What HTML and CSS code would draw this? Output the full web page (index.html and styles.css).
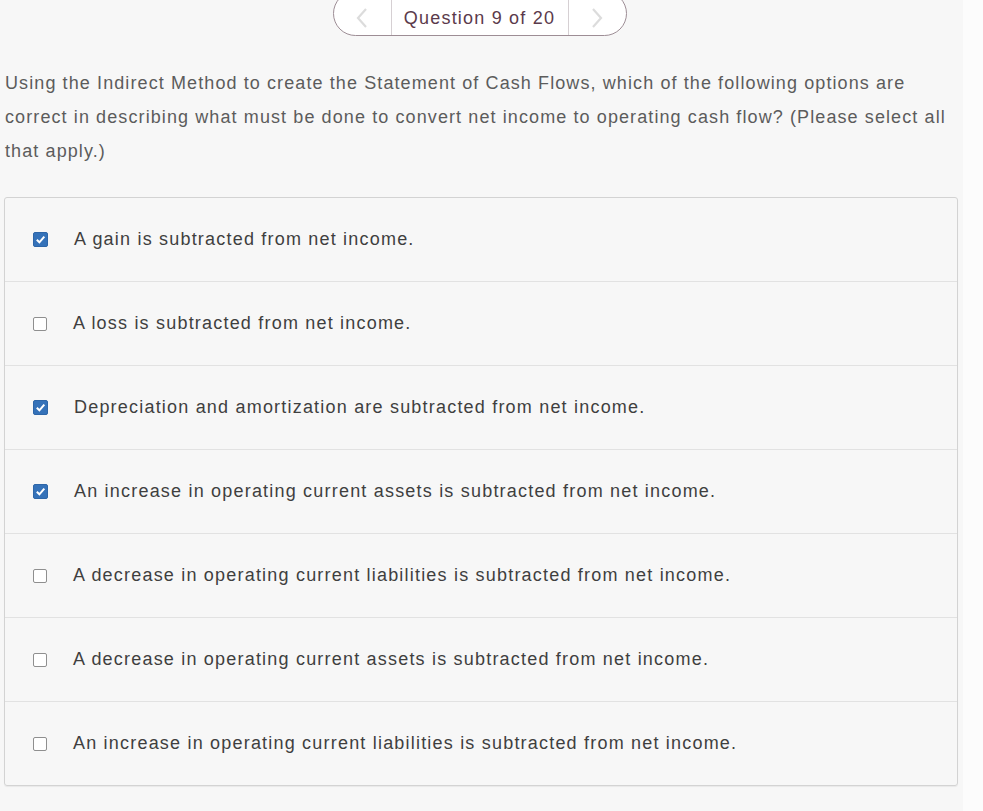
FILE: index.html
```html
<!DOCTYPE html>
<html lang="en">
<head>
<meta charset="utf-8">
<title>Question 9 of 20</title>
<link rel="stylesheet" href="styles.css">
</head>
<body>
<div class="main">
  <nav class="pager">
    <div class="pill">
      <span class="arrow">
        <svg width="14" height="22" viewBox="0 0 14 22"><path d="M11 2 L3 11 L11 20" fill="none" stroke="#dcdcdc" stroke-width="2.2"/></svg>
      </span>
      <span class="label">Question 9 of 20</span>
      <span class="arrow">
        <svg width="14" height="22" viewBox="0 0 14 22"><path d="M3 2 L11 11 L3 20" fill="none" stroke="#dcdcdc" stroke-width="2.2"/></svg>
      </span>
    </div>
  </nav>
  <p class="question">Using the Indirect Method to create the Statement of Cash Flows, which of the following options are correct in describing what must be done to convert net income to operating cash flow? (Please select all that apply.)</p>
  <ul class="options">
    <li class="option"><span class="box checked"><svg width="11" height="11" viewBox="0 0 11 11"><path d="M1.8 5.8 L4.4 8.3 L9.3 2.6" fill="none" stroke="#fff" stroke-width="2"/></svg></span><span class="text">A gain is subtracted from net income.</span></li>
    <li class="option"><span class="box"></span><span class="text">A loss is subtracted from net income.</span></li>
    <li class="option"><span class="box checked"><svg width="11" height="11" viewBox="0 0 11 11"><path d="M1.8 5.8 L4.4 8.3 L9.3 2.6" fill="none" stroke="#fff" stroke-width="2"/></svg></span><span class="text">Depreciation and amortization are subtracted from net income.</span></li>
    <li class="option"><span class="box checked"><svg width="11" height="11" viewBox="0 0 11 11"><path d="M1.8 5.8 L4.4 8.3 L9.3 2.6" fill="none" stroke="#fff" stroke-width="2"/></svg></span><span class="text">An increase in operating current assets is subtracted from net income.</span></li>
    <li class="option"><span class="box"></span><span class="text">A decrease in operating current liabilities is subtracted from net income.</span></li>
    <li class="option"><span class="box"></span><span class="text">A decrease in operating current assets is subtracted from net income.</span></li>
    <li class="option"><span class="box"></span><span class="text">An increase in operating current liabilities is subtracted from net income.</span></li>
  </ul>
</div>
</body>
</html>
```
FILE: styles.css
```css
html, body {
  margin: 0;
  padding: 0;
}
body {
  background: #fcfcfc;
  font-family: "Liberation Sans", Arial, sans-serif;
  overflow: hidden;
}
.main {
  width: 963px;
  min-height: 811px;
  background: #f7f7f7;
  padding: 0 0 0 4px;
  box-sizing: border-box;
}
.pager {
  display: flex;
  justify-content: center;
  padding-right: 8px;
}
.pill {
  margin-top: -9px;
  height: 45px;
  width: 294px;
  box-sizing: border-box;
  border: 1.5px solid #9d8d95;
  border-radius: 24px;
  background: #fff;
  display: flex;
  align-items: stretch;
}
.arrow {
  width: 57px;
  display: flex;
  align-items: center;
  justify-content: center;
  padding-top: 8px;
}
.label {
  flex: 1;
  border-left: 1px solid #d6d0d3;
  border-right: 1px solid #d6d0d3;
  display: flex;
  align-items: center;
  justify-content: center;
  padding-top: 9px;
  color: #5b3a4b;
  font-size: 18px;
  letter-spacing: 1.2px;
}
.question {
  margin: 30px 0 29px 1px;
  font-size: 18px;
  letter-spacing: 1.1px;
  line-height: 34px;
  color: #5c5c5c;
  width: 956px;
}
.options {
  list-style: none;
  margin: 0;
  padding: 0;
  width: 952px;
  border: 1px solid #d3d3d3;
  border-radius: 3px;
  box-shadow: 0 1px 1px rgba(0,0,0,0.06);
}
.option {
  height: 83px;
  display: flex;
  align-items: center;
  padding-left: 28px;
  border-top: 1px solid #e2e2e2;
}
.option:first-child {
  border-top: none;
}
.box {
  width: 12px;
  height: 12px;
  border: 1.5px solid #8f8f8f;
  border-radius: 2px;
  background: #fff;
  display: flex;
  align-items: center;
  justify-content: center;
  flex: none;
}
.box.checked {
  width: 13px;
  height: 13px;
  border-color: #2e66a8;
  background: #3572b9;
}
.text {
  margin-left: 26px;
  font-size: 18px;
  letter-spacing: 1.2px;
  color: #3f3f3f;
}
```
